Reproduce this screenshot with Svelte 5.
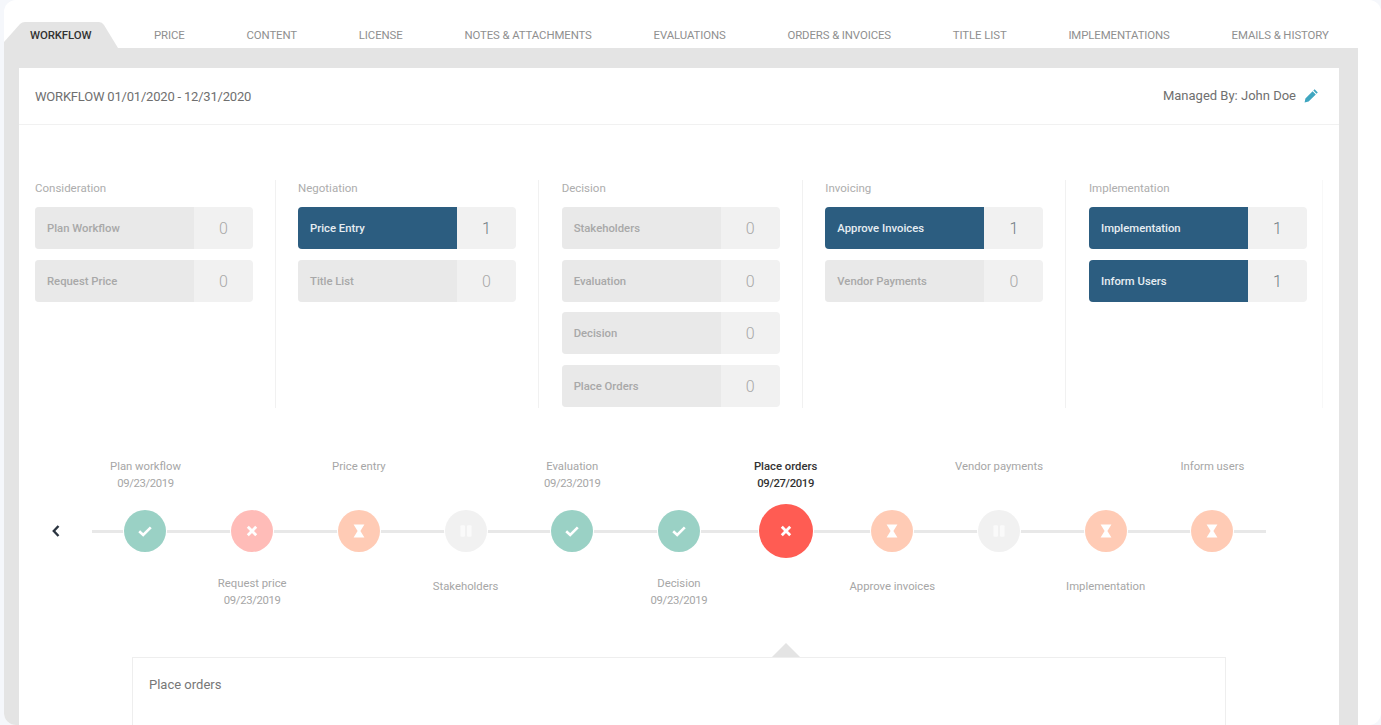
<script lang="ts">
  const tabs = ['Workflow', 'Price', 'Content', 'License', 'Notes & Attachments', 'Evaluations', 'Orders & Invoices', 'Title List', 'Implementations', 'Emails & History']

  const stages = [
    { title: 'Consideration', rows: [['Plan Workflow', 0], ['Request Price', 0]] },
    { title: 'Negotiation', rows: [['Price Entry', 1], ['Title List', 0]] },
    { title: 'Decision', rows: [['Stakeholders', 0], ['Evaluation', 0], ['Decision', 0], ['Place Orders', 0]] },
    { title: 'Invoicing', rows: [['Approve Invoices', 1], ['Vendor Payments', 0]] },
    { title: 'Implementation', rows: [['Implementation', 1], ['Inform Users', 1]] },
  ]

  const steps = [
    { name: 'Plan workflow', date: '09/23/2019', kind: 'done' },
    { name: 'Request price', date: '09/23/2019', kind: 'rejected' },
    { name: 'Price entry', kind: 'waiting' },
    { name: 'Stakeholders', kind: 'paused' },
    { name: 'Evaluation', date: '09/23/2019', kind: 'done' },
    { name: 'Decision', date: '09/23/2019', kind: 'done' },
    { name: 'Place orders', date: '09/27/2019', kind: 'rejected', current: true },
    { name: 'Approve invoices', kind: 'waiting' },
    { name: 'Vendor payments', kind: 'paused' },
    { name: 'Implementation', kind: 'waiting' },
    { name: 'Inform users', kind: 'waiting' },
  ]
</script>

{#snippet label(step)}
  <div class="label" class:single={!step.date} class:current={step.current}>
    <div>{step.name}</div>
    {#if step.date}<div class="date">{step.date}</div>{/if}
  </div>
{/snippet}

<div class="window">
  <nav class="tabs">
    {#each tabs as tab, i}
      <div class="tab" class:active={i === 0}>{tab}</div>
    {/each}
  </nav>

  <div class="frame">
    <main class="panel">
      <header class="head">
        <div class="head-title">WORKFLOW 01/01/2020 - 12/31/2020</div>
        <div class="manager">
          Managed By: John Doe
          <svg width="15" height="15" viewBox="0 0 15 15">
            <path d="M10.6 1.2 13.8 4.4 12.5 5.7 9.3 2.5Z M8.6 3.2 11.8 6.4 4.6 13.6 0.6 14.4 1.4 10.4Z" fill="#3fa6c0" />
          </svg>
        </div>
      </header>

      <section class="stages">
        {#each stages as stage}
          <div class="stage">
            <div class="stage-title">{stage.title}</div>
            {#each stage.rows as [name, count]}
              <div class="row" class:on={count > 0}>
                <div class="row-name">{name}</div>
                <div class="row-count">{count}</div>
              </div>
            {/each}
          </div>
        {/each}
      </section>

      <section class="timeline">
        <div class="prev">
          <svg width="10" height="14" viewBox="0 0 10 14">
            <path d="M7.5 2 2.8 7 7.5 12" fill="none" stroke="#2b3440" stroke-width="2.4" />
          </svg>
        </div>
        <div class="steps">
          {#each steps as step, i}
            <div class="step">
              <div class="above">{#if i % 2 === 0}{@render label(step)}{/if}</div>
              <div class="dot-slot">
                <div class="dot {step.kind}" class:big={step.current}>
                  <svg width="18" height="18" viewBox="0 0 18 18">
                    {#if step.kind === 'done'}
                      <path d="M3.2 9.2 7.2 13 14.8 5.4" fill="none" stroke="#fff" stroke-width="2.6" />
                    {:else if step.kind === 'rejected'}
                      <path d="M4.8 4.8 13.2 13.2 M13.2 4.8 4.8 13.2" fill="none" stroke="#fff" stroke-width="2.8" />
                    {:else if step.kind === 'waiting'}
                      <path d="M3.6 2.4H14.4L10.4 9 14.4 15.6H3.6L7.6 9Z" fill="#fff" />
                    {:else}
                      <rect x="3.4" y="3.2" width="4.6" height="11.6" rx="1" fill="#fafafa" />
                      <rect x="10" y="3.2" width="4.6" height="11.6" rx="1" fill="#fafafa" />
                    {/if}
                  </svg>
                </div>
              </div>
              <div class="below">{#if i % 2 === 1}{@render label(step)}{/if}</div>
            </div>
          {/each}
        </div>
      </section>

      <section class="detail">Place orders</section>
    </main>
  </div>
</div>

<style>
  :global(body) {
    background: #f5f7fb;
    overflow: hidden;
  }

  .window {
    margin-left: 4px;
    width: 1377px;
    height: 725px;
    background: #fff;
    border-radius: 12px;
    overflow: hidden;
    font-family: Roboto, "Liberation Sans", sans-serif;
    color: #777;
  }

  .tabs {
    display: flex;
    width: 1354px;
    height: 26px;
    padding-top: 22px;
    font-size: 11.4px;
    line-height: 26px;
    text-transform: uppercase;
    color: #8f8f8f;
    letter-spacing: -0.1px;
  }

  .tab {
    flex-shrink: 0;
    padding: 0 30.9px;
    white-space: nowrap;
  }

  .tab.active {
    width: 114px;
    box-sizing: border-box;
    padding: 0 0 0 26px;
    margin-right: 5.1px;
    background: #e4e4e4;
    color: #333;
    font-weight: 500;
    clip-path: path('M0 20 L16 2 Q18 0 21 0 H95 Q98 0 100 3 L114 26 H0Z');
  }

  .frame {
    width: 1354px;
    height: 677px;
    box-sizing: border-box;
    padding: 20px 19px 0 15px;
    background: #e4e4e4;
  }

  .panel {
    height: 657px;
    background: #fff;
    overflow: hidden;
  }

  .head {
    display: flex;
    justify-content: space-between;
    align-items: center;
    height: 57px;
    box-sizing: border-box;
    padding: 1px 20px 0 16px;
    border-bottom: 1px solid #f1f1f1;
    font-size: 13px;
    color: #6f6f6f;
  }

  .head-title {
    letter-spacing: -0.2px;
  }

  .manager {
    display: flex;
    align-items: center;
    gap: 8px;
    margin-top: -2px;
  }

  .stages {
    display: flex;
    padding: 55px 0 0 16px;
  }

  .stage {
    width: 218px;
    height: 228px;
    padding-right: 22px;
    padding-left: 22.67px;
    border-right: 1px solid #f1f1f1;
  }

  .stage:first-child {
    padding-left: 0;
    margin-right: -0.67px;
  }

  .stage:last-child {
    padding-right: 15px;
    border-right-color: #f8f8f8;
  }

  .stage-title {
    height: 16px;
    margin-bottom: 11px;
    font-size: 11.5px;
    line-height: 16px;
    color: #adadad;
  }

  .row {
    display: flex;
    height: 42px;
    margin-bottom: 10.67px;
    border-radius: 4px;
    overflow: hidden;
    background: #f1f1f1;
  }

  .row-name {
    width: 159px;
    box-sizing: border-box;
    padding-left: 12px;
    background: #e9e9e9;
    font-size: 11.3px;
    font-weight: 500;
    line-height: 44px;
    color: #a8a8a8;
  }

  .row-count {
    flex: 1;
    text-align: center;
    font-size: 16px;
    font-weight: 300;
    line-height: 44px;
    color: #a8a8a8;
  }

  .row.on .row-name {
    background: #2c5d80;
    color: #e6edf2;
  }

  .row.on .row-count {
    color: #6f7a82;
  }

  .timeline {
    display: flex;
    margin-top: 47px;
  }

  .prev {
    display: flex;
    align-items: center;
    width: 73.15px;
    height: 54px;
    margin-top: 49px;
    padding-left: 32px;
    box-sizing: border-box;
  }

  .steps {
    position: relative;
    display: grid;
    grid-template-columns: repeat(11, 106.7px);
  }

  .steps::before {
    content: '';
    position: absolute;
    left: 0;
    top: 75px;
    width: 1174px;
    height: 3px;
    background: #e8e8e8;
  }

  .step {
    position: relative;
    text-align: center;
  }

  .above {
    height: 49px;
    padding-top: 2.5px;
    box-sizing: border-box;
  }

  .below {
    height: 72px;
    padding-top: 16.5px;
    box-sizing: border-box;
  }

  .dot-slot {
    display: flex;
    align-items: center;
    justify-content: center;
    height: 54px;
  }

  .dot {
    display: flex;
    align-items: center;
    justify-content: center;
    width: 42px;
    height: 42px;
    border-radius: 50%;
    box-shadow: 0 0 0 1px #fff;
  }

  .dot.big {
    width: 54px;
    height: 54px;
  }

  .dot.done { background: #9ad1c5; }
  .dot.rejected { background: #ffbcb8; }
  .dot.waiting { background: #ffcbb5; }
  .dot.paused { background: #f1f1f1; }
  .dot.rejected.big { background: #ff5c53; }

  .label {
    font-size: 11.3px;
    line-height: 17px;
    color: #a6a6a6;
    white-space: nowrap;
  }

  .date {
    letter-spacing: -0.35px;
  }

  .below .label.single {
    padding-top: 3.5px;
  }

  .label.current {
    color: #333;
    font-weight: 500;
  }

  .detail {
    position: relative;
    width: 1094px;
    height: 100px;
    margin: 27px 0 0 113px;
    box-sizing: border-box;
    padding: 18px 16px;
    border: 1px solid #eee;
    font-size: 13px;
    line-height: 18px;
    color: #777;
  }

  .detail::before {
    content: '';
    position: absolute;
    left: 639px;
    top: -15px;
    border-left: 14px solid transparent;
    border-right: 14px solid transparent;
    border-bottom: 14px solid #e4e4e4;
  }
</style>
